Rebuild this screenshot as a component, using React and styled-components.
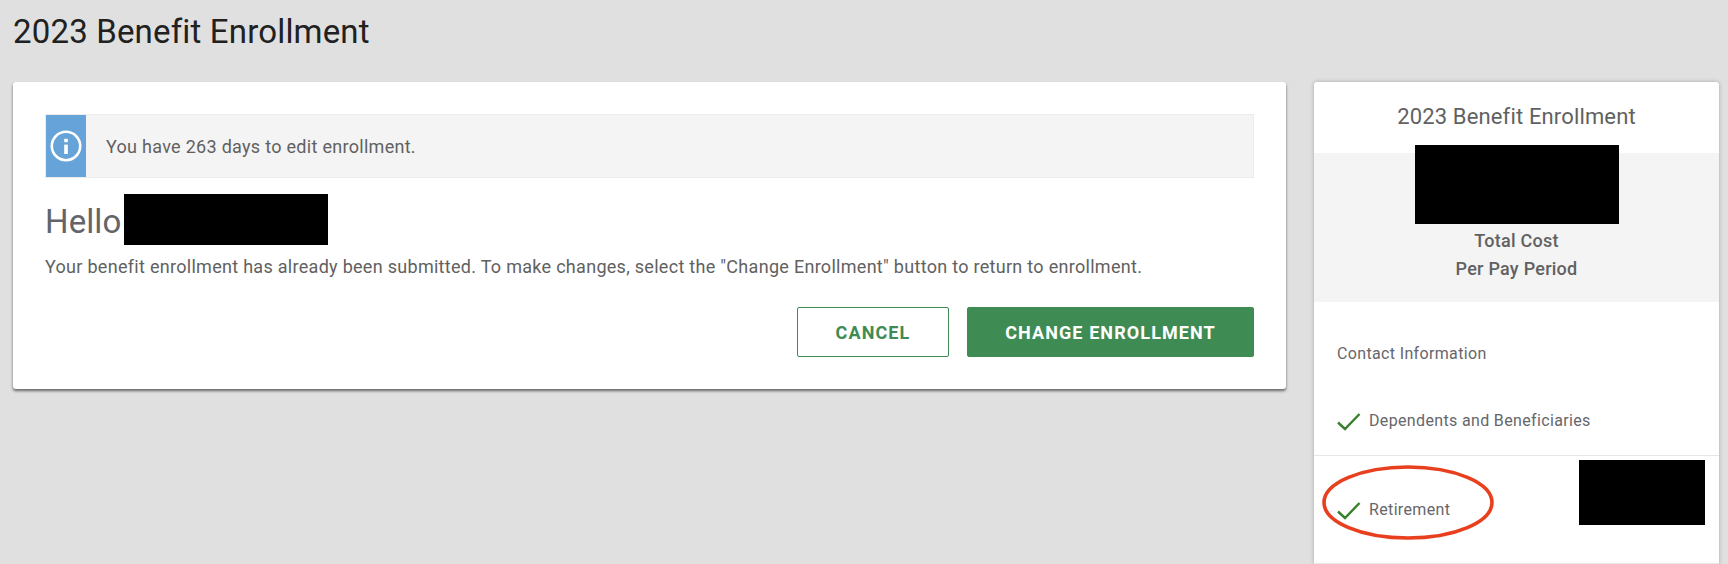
import React from "react";
import styled, { createGlobalStyle } from "styled-components";

const Global = createGlobalStyle`
  html, body { margin: 0; padding: 0; height: 564px; overflow: hidden; background: #e0e0e0; }
  body { font-family: Roboto, "Liberation Sans", sans-serif; color: #616161; }
`;
const Page = styled.div`
  height: 564px;
  overflow: hidden;
  box-sizing: border-box;
  padding: 13px 9px 0 13px;
`;
const PageTitle = styled.h1`
  margin: 0;
  height: 38px;
  line-height: 38px;
  font-size: 33px;
  font-weight: 400;
  letter-spacing: 0.17px;
  color: #212121;
`;
const Columns = styled.div`
  display: flex;
  align-items: flex-start;
  gap: 28px;
  margin-top: 31px;
`;
const MainCard = styled.section`
  width: 1273px;
  height: 307px;
  box-sizing: border-box;
  padding: 32px 32px 0;
  background: #fff;
  border-radius: 3px;
  box-shadow: 0 2px 3px rgba(0,0,0,.55);
`;
const Alert = styled.div`
  display: flex;
  align-items: stretch;
  height: 64px;
  box-sizing: border-box;
  border: 1px solid #ececec;
  background: #f4f4f4;
`;
const AlertIcon = styled.div`
  width: 40px;
  display: flex;
  align-items: center;
  justify-content: center;
  background: #65a3d8;
`;
const AlertText = styled.div`
  display: flex;
  align-items: center;
  padding-left: 20px;
  font-size: 18px;
  letter-spacing: .29px;
`;
const HelloRow = styled.div`
  display: flex;
  align-items: center;
  margin-top: 16px;
  height: 51px;
`;
const Hello = styled.h2`
  margin: 4px 0 0;
  font-size: 33px;
  font-weight: 400;
  letter-spacing: .1px;
  color: #646469;
`;
const Redaction = styled.div`
  background: #000;
  width: ${p => p.$w}px;
  height: ${p => p.$h}px;
`;
const HelloRedaction = styled(Redaction)`
  margin-left: 3px;
`;
const Message = styled.p`
  margin: 9px 0 0;
  font-size: 18px;
  line-height: 26px;
  letter-spacing: .29px;
`;
const Actions = styled.div`
  display: flex;
  justify-content: flex-end;
  gap: 18px;
  margin-top: 27px;
`;
const Button = styled.button`
  height: 50px;
  width: ${p => p.$w}px;
  padding: 0;
  box-sizing: border-box;
  border: 1px solid #3e8c53;
  border-radius: 2px;
  font: 700 18px Roboto, sans-serif;
  letter-spacing: 1.1px;
  color: ${p => (p.$primary ? "#fff" : "#3e8c53")};
  background: ${p => (p.$primary ? "#3e8c53" : "#fff")};
`;
const Side = styled.aside`
  position: relative;
  width: 405px;
  height: 482px;
  background: #fff;
  border-radius: 3px 3px 0 0;
  box-shadow: 0 0 4px rgba(0,0,0,.25);
`;
const SideTitle = styled.div`
  height: 71px;
  box-sizing: border-box;
  padding-top: 23px;
  text-align: center;
  font-size: 22px;
  line-height: 24px;
  letter-spacing: .15px;
`;
const Summary = styled.div`
  height: 149px;
  box-sizing: border-box;
  padding-top: 74px;
  background: #f4f4f4;
  text-align: center;
  font-size: 18px;
  font-weight: 500;
  line-height: 28px;
  letter-spacing: .25px;
`;
const SideRedaction = styled(Redaction)`
  position: absolute;
  left: ${p => p.$x}px;
  top: ${p => p.$y}px;
`;
const Steps = styled.ul`
  list-style: none;
  margin: 0;
  padding: 0;
`;
const Step = styled.li`
  display: flex;
  align-items: center;
  gap: 8px;
  height: ${p => p.$h}px;
  box-sizing: border-box;
  padding: ${p => p.$pad}px 0 0 23px;
  font-size: 16px;
  letter-spacing: .35px;
  color: #66666b;
  border-bottom: ${p => (p.$rule ? "1px solid #e6e6e6" : "none")};
`;
const Check = styled.svg`
  width: 24px;
  height: 18px;
  flex: none;
  margin-top: 2px;
`;
const Ellipse = styled.svg`
  position: absolute;
  left: 8px;
  top: 382px;
  width: 174px;
  height: 78px;
`;

const CheckMark = () => (
  <Check viewBox="0 0 24 18" fill="none">
    <path d="M1 9.5 L8 16 L22.5 1" stroke="#38802c" strokeWidth="2.4" />
  </Check>
);

export default function App() {
  return (
    <Page>
      <Global />
      <PageTitle>2023 Benefit Enrollment</PageTitle>
      <Columns>
        <MainCard>
          <Alert>
            <AlertIcon>
              <svg width="32" height="32" viewBox="0 0 32 32" fill="none">
                <circle cx="16" cy="16" r="14.2" stroke="#fff" strokeWidth="2.6" />
                <rect x="14.2" y="14.6" width="3.6" height="9.4" fill="#fff" />
                <rect x="14.2" y="8.8" width="3.6" height="3.4" fill="#fff" />
              </svg>
            </AlertIcon>
            <AlertText>You have 263 days to edit enrollment.</AlertText>
          </Alert>
          <HelloRow>
            <Hello>Hello</Hello>
            <HelloRedaction $w={204} $h={51} />
          </HelloRow>
          <Message>Your benefit enrollment has already been submitted. To make changes, select the "Change Enrollment" button to return to enrollment.</Message>
          <Actions>
            <Button $w={152}>CANCEL</Button>
            <Button $w={287} $primary>CHANGE ENROLLMENT</Button>
          </Actions>
        </MainCard>
        <Side>
          <SideTitle>2023 Benefit Enrollment</SideTitle>
          <Summary>Total Cost<br />Per Pay Period</Summary>
          <SideRedaction $x={101} $y={63} $w={204} $h={79} />
          <Steps>
            <Step $h={84} $pad={19}>Contact Information</Step>
            <Step $h={70} $pad={0} $rule><CheckMark />Dependents and Beneficiaries</Step>
            <Step $h={108} $pad={0} $rule><CheckMark />Retirement</Step>
          </Steps>
          <SideRedaction $x={265} $y={378} $w={126} $h={65} />
          <Ellipse viewBox="0 0 174 78" fill="none">
            <ellipse cx="86" cy="38.5" rx="84" ry="35.5" stroke="#e8401f" strokeWidth="3.6" />
          </Ellipse>
        </Side>
      </Columns>
    </Page>
  );
}
